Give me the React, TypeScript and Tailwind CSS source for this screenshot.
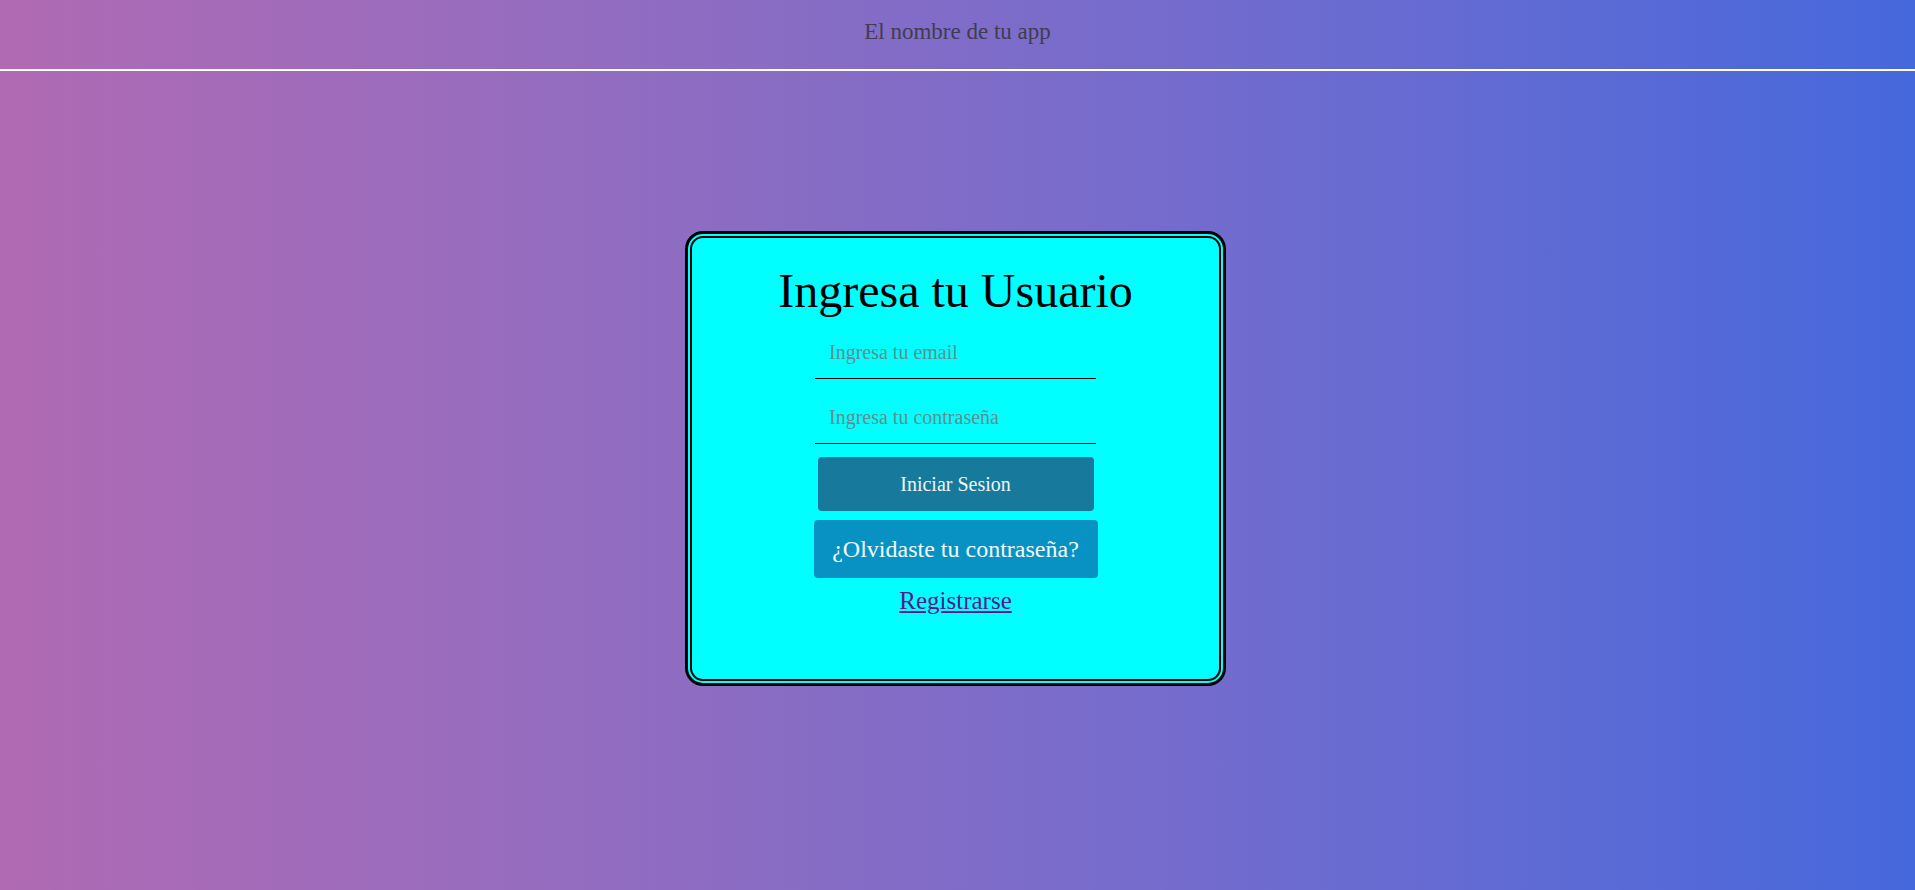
import { useState } from "react";

const Login = () => {
  const [email, setEmail] = useState("");
  const [password, setPassword] = useState("");

  return (
    <div className="w-[539px] h-[453px] border-[6px] border-double border-black rounded-[17px] shadow-[0_0_0_1px_#000] bg-[#00ffff] flex flex-col items-center pt-[29px]">
      <h1 className="text-[48px] leading-none text-black">Ingresa tu Usuario</h1>

      <input
        type="email"
        value={email}
        onChange={(e) => setEmail(e.target.value)}
        placeholder="Ingresa tu email"
        className="mt-[12px] w-[281px] h-[52px] pl-[14px] text-[20px] bg-transparent border-b border-black outline-none placeholder:text-[#5f8f8f]"
      />
      <input
        type="password"
        value={password}
        onChange={(e) => setPassword(e.target.value)}
        placeholder="Ingresa tu contraseña"
        className="mt-[13px] w-[281px] h-[52px] pl-[14px] text-[20px] bg-transparent border-b border-black outline-none placeholder:text-[#5f8f8f]"
      />

      <button className="mt-[13px] w-[276px] h-[54px] rounded-[4px] bg-[#17799b] text-[20px] text-[#eef6f8]">
        Iniciar Sesion
      </button>
      <button className="mt-[9px] w-[284px] h-[58px] rounded-[4px] bg-[#0892c3] text-[24px] text-[#f2fbfd]">
        ¿Olvidaste tu contraseña?
      </button>
      <a href="#" className="mt-[4px] text-[25px] text-[#551a8b] underline">
        Registrarse
      </a>
    </div>
  );
};

const App = () => {
  return (
    <div
      className="h-screen flex flex-col bg-linear-to-r from-[#b06ab3] to-[#4568dc]"
      style={{ fontFamily: '"Liberation Serif", "DejaVu Serif", serif' }}
    >
      {/* encabezado */}
      <header className="h-[71px] pt-[15px] border-b-2 border-white text-center">
        <span className="text-[23px] text-[#403c52]">El nombre de tu app</span>
      </header>

      <main className="flex-1 flex justify-center pt-[161px] pr-[4px]">
        <Login />
      </main>
    </div>
  );
};

export default App;
